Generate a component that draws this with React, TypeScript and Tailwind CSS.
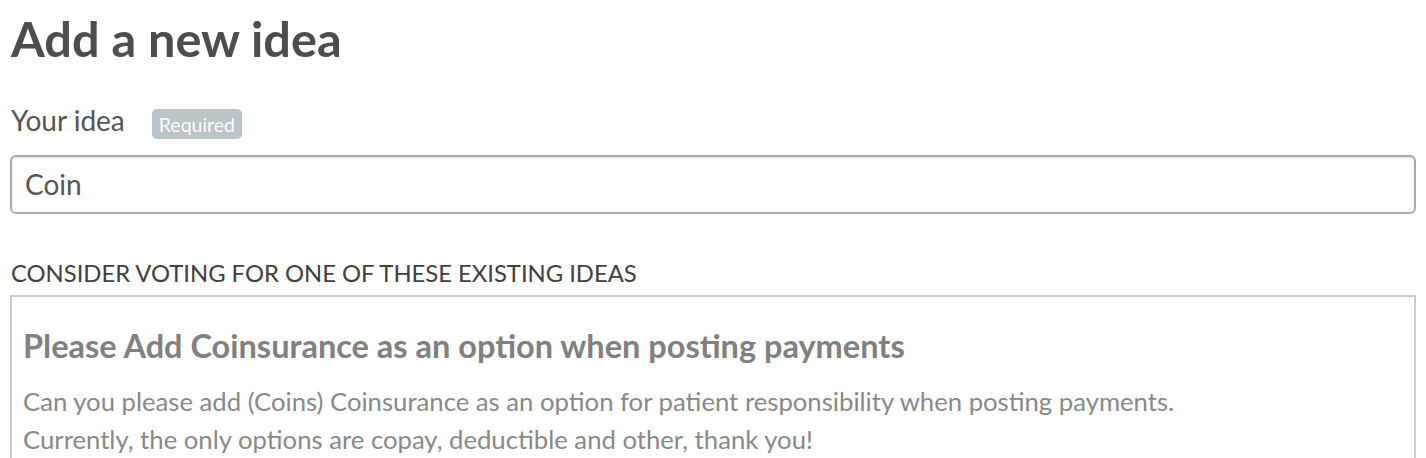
export default function App() {
  return (
    <div className="bg-white w-[1426px] h-[458px] overflow-hidden px-[10px]" style={{ fontFamily: 'Lato, "Open Sans", sans-serif' }}>
      <h1 className="text-[48.7px] font-bold text-[#4d4d4d] leading-none pt-[13.7px] pl-[1px]">Add a new idea</h1>
      <div className="flex items-start mt-[43.5px] pl-[1px]">
        <span className="text-[28px] text-[#555555] leading-none">Your idea</span>
        <span className="ml-[27px] mt-[3px] h-[30px] flex items-center pt-[1px] bg-[#b9c3c8] text-white text-[19.5px] leading-none rounded-[5px] px-[7px]">Required</span>
      </div>
      <div className="mt-[16px] h-[59px] border-2 border-[#aaaaaa] rounded-[6px] shadow-[inset_0_1px_2px_rgba(0,0,0,0.15)] flex items-center px-[13px] text-[28px] leading-none text-[#555555]">
        Coin
      </div>
      <div className="mt-[48px] text-[23.8px] text-[#404040] uppercase leading-none pl-[1px]">Consider voting for one of these existing ideas</div>
      <div className="mt-[9px] border-2 border-[#cccccc] border-b-0 h-[200px] px-[11px] pt-[33.3px]">
        <div className="text-[32.5px] font-bold text-[#808080] leading-none">Please Add Coinsurance as an option when posting payments</div>
        <div className="mt-[19.3px] text-[25.7px] text-[#888888] leading-[38px]">
          Can you please add (Coins) Coinsurance as an option for patient responsibility when posting payments.<br />
          Currently, the only options are copay, deductible and other, thank you!
        </div>
      </div>
    </div>
  );
}
